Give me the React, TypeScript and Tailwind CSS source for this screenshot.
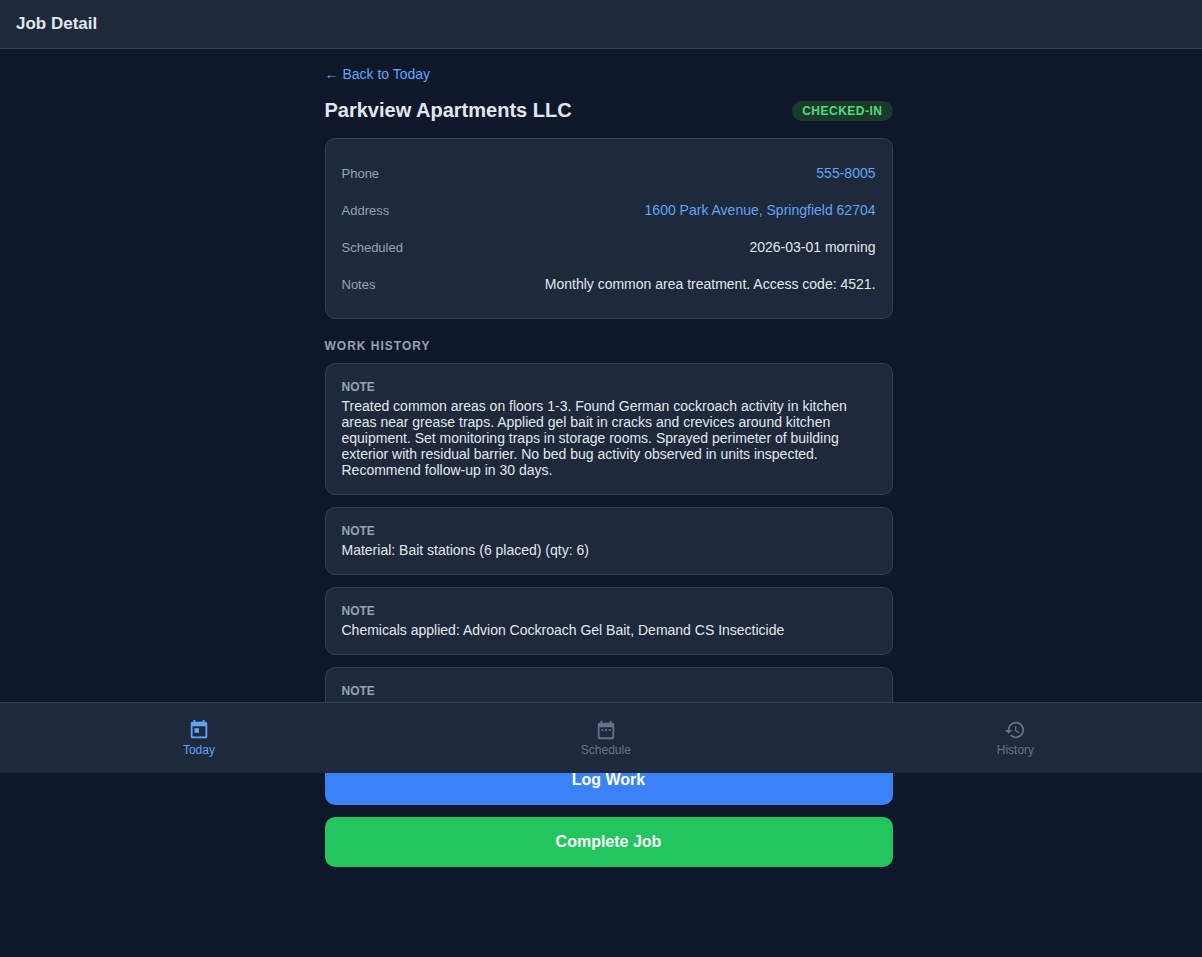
import type { ReactNode } from "react";
import { MdDateRange, MdHistory, MdToday } from "react-icons/md";

const notes = [
  "Treated common areas on floors 1-3. Found German cockroach activity in kitchen areas near grease traps. Applied gel bait in cracks and crevices around kitchen equipment. Set monitoring traps in storage rooms. Sprayed perimeter of building exterior with residual barrier. No bed bug activity observed in units inspected. Recommend follow-up in 30 days.",
  "Material: Bait stations (6 placed) (qty: 6)",
  "Chemicals applied: Advion Cockroach Gel Bait, Demand CS Insecticide",
  "",
];

const tabs = [
  { label: "Today", Icon: MdToday, active: true },
  { label: "Schedule", Icon: MdDateRange, active: false },
  { label: "History", Icon: MdHistory, active: false },
];

function DetailRow({ label, children }: { label: string; children: ReactNode }) {
  return (
    <div className="flex items-baseline justify-between gap-4 py-2.5">
      <dt className="text-[13px] leading-[14px] text-[#94a3b8]">{label}</dt>
      <dd className="text-right text-sm leading-4">{children}</dd>
    </div>
  );
}

function NoteCard({ text }: { text: string }) {
  return (
    <article className="rounded-[10px] border border-[#334155] bg-[#1e293b] p-4">
      <h3 className="mb-1 text-xs leading-[14px] font-semibold text-[#94a3b8]">NOTE</h3>
      <p className="min-h-4 text-sm leading-4">{text}</p>
    </article>
  );
}

export default function App() {
  return (
    <div className="min-h-screen overflow-x-hidden bg-[#0f172a] font-['Liberation_Sans',Arial,sans-serif] text-[#e2e8f0]">
      <div className="-mr-[15px]">
        <header className="border-b border-[#334155] bg-[#1e293b] px-4 py-3">
          <h1 className="text-[17px] leading-6 font-semibold">Job Detail</h1>
        </header>

        <main className="mx-auto max-w-[600px] px-4 pt-4 pb-20">
          <a href="#today" className="mb-4 flex text-sm leading-[18px] text-[#60a5fa]">
            ← Back to Today
          </a>

          <div className="mb-4 flex items-center justify-between">
            <h2 className="text-xl leading-[23px] font-bold">Parkview Apartments LLC</h2>
            <span className="rounded-full bg-[#1a3a2a] px-2.5 py-[3px] text-xs leading-[14px] font-semibold tracking-[0.5px] text-[#4ade80]">
              CHECKED-IN
            </span>
          </div>

          <dl className="flex flex-col gap-px rounded-[10px] border border-[#334155] bg-[#1e293b] p-4">
            <DetailRow label="Phone">
              <a href="tel:555-8005" className="text-[#60a5fa]">555-8005</a>
            </DetailRow>
            <DetailRow label="Address">
              <a href="#map" className="text-[#60a5fa]">1600 Park Avenue, Springfield 62704</a>
            </DetailRow>
            <DetailRow label="Scheduled">2026-03-01 morning</DetailRow>
            <DetailRow label="Notes">Monthly common area treatment. Access code: 4521.</DetailRow>
          </dl>

          <h2 className="mt-5 mb-2.5 text-xs leading-[14px] font-semibold tracking-[1px] text-[#94a3b8]">
            WORK HISTORY
          </h2>
          <div className="flex flex-col gap-3">
            {notes.map((text, i) => (
              <NoteCard key={i} text={text} />
            ))}
          </div>

          <div className="mt-5 flex flex-col gap-3">
            <button type="button" className="rounded-[10px] bg-[#3b82f6] py-4 text-base leading-[18px] font-semibold text-white">
              Log Work
            </button>
            <button type="button" className="rounded-[10px] bg-[#22c55e] py-4 text-base leading-[18px] font-semibold text-white">
              Complete Job
            </button>
          </div>
        </main>
      </div>

      <nav className="fixed -right-[15px] bottom-46 left-0 flex justify-around border-t border-[#334155] bg-[#1e293b] py-2">
        {tabs.map(({ label, Icon, active }) => (
          <a
            key={label}
            href={`#${label.toLowerCase()}`}
            className={`flex flex-col items-center gap-0.5 py-2 text-xs leading-[14px] ${active ? "text-[#60a5fa]" : "text-[#64748b]"}`}
          >
            <Icon size={22} />
            {label}
          </a>
        ))}
      </nav>
    </div>
  );
}
